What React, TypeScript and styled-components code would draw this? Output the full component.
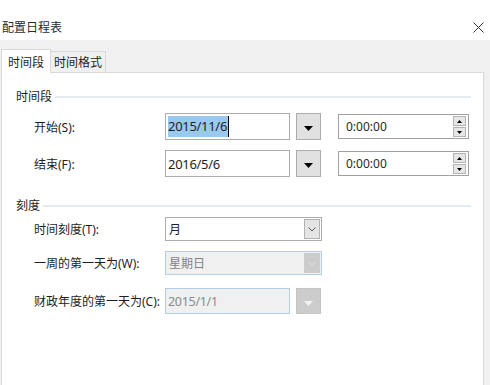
import styled, { createGlobalStyle } from 'styled-components';

const GlobalStyle = createGlobalStyle`
  html, body {
    margin: 0;
    padding: 0;
    background: #fff;
  }
  body {
    font-family: 'Noto Sans', 'Noto Sans CJK SC', sans-serif;
    color: #1e1e1e;
  }
`;

const Window = styled.div`
  width: 490px;
  height: 385px;
  overflow: hidden;
  background: #fff;
  display: flex;
  flex-direction: column;
`;

const TitleBar = styled.div`
  height: 40px;
  flex: none;
  display: flex;
  align-items: center;
  justify-content: space-between;
  padding: 0 6px 0 2px;
  box-sizing: border-box;
`;

const Title = styled.span`
  font-size: 12px;
  color: #2b2b2b;
  margin-top: 14px;
`;

const CloseButton = styled.div`
  width: 11px;
  height: 11px;
  margin-top: 15px;
  display: flex;
`;

const Body = styled.div`
  flex: 1;
  background: #f0f0f0;
  padding: 9px 6px 0 1px;
  display: flex;
  flex-direction: column;
`;

const TabStrip = styled.div`
  height: 23px;
  display: flex;
  align-items: flex-end;
  position: relative;
  z-index: 1;
`;

const Tab = styled.div<{ $active?: boolean }>`
  box-sizing: border-box;
  width: ${(p) => (p.$active ? 50 : 55)}px;
  height: ${(p) => (p.$active ? 24 : 21)}px;
  margin-bottom: ${(p) => (p.$active ? -1 : 0)}px;
  border: 1px solid #d9d9d9;
  border-bottom: none;
  border-left: ${(p) => (p.$active ? '1px solid #d9d9d9' : 'none')};
  background: ${(p) => (p.$active ? '#fff' : '#f0f0f0')};
  font-size: 12px;
  color: #1e1e1e;
  display: flex;
  align-items: center;
  justify-content: center;
`;

const Panel = styled.div`
  flex: 1;
  background: #fff;
  border: 1px solid #d9d9d9;
  border-bottom: none;
  padding: 15px 12px 0 14px;
  display: flex;
  flex-direction: column;
`;

const GroupHeader = styled.div<{ $gap?: number }>`
  height: 16px;
  display: flex;
  align-items: center;
  gap: 3px;
  margin-top: ${(p) => p.$gap ?? 0}px;
`;

const GroupTitle = styled.span`
  font-size: 12px;
  color: #1e1e1e;
`;

const GroupRule = styled.div`
  flex: 1;
  height: 2px;
  background: #e5eaef;
  margin-top: 2px;
`;

const FieldRow = styled.div<{ $gap: number; $height: number }>`
  display: flex;
  align-items: center;
  height: ${(p) => p.$height}px;
  margin-top: ${(p) => p.$gap}px;
  padding-left: 18px;
`;

const FieldLabel = styled.span`
  width: 131px;
  flex: none;
  font-size: 12px;
  color: #1e1e1e;
`;

const DateInput = styled.div<{ $disabled?: boolean }>`
  box-sizing: border-box;
  width: 125px;
  height: ${(p) => (p.$disabled ? 26 : 27)}px;
  border: 1px solid ${(p) => (p.$disabled ? '#b5cde6' : '#acacac')};
  background: ${(p) => (p.$disabled ? '#f0f0f0' : '#fff')};
  color: ${(p) => (p.$disabled ? '#8a8a8a' : '#1e1e1e')};
  font-size: ${(p) => (p.$disabled ? 12.5 : 13)}px;
  letter-spacing: -0.3px;
  display: flex;
  align-items: center;
  padding: 0 0 0 2px;
`;

const Selected = styled.span`
  background: #99c9ef;
  color: #1e1e1e;
  padding: 1px 1px 2px 0;
  border-right: 1px solid #000;
`;

const DropButton = styled.div<{ $disabled?: boolean }>`
  box-sizing: border-box;
  width: 25px;
  height: ${(p) => (p.$disabled ? 26 : 27)}px;
  margin-left: 6px;
  border: 1px solid ${(p) => (p.$disabled ? '#c4c4c4' : '#adadad')};
  background: ${(p) => (p.$disabled ? '#cccccc' : '#e1e1e1')};
  display: flex;
  align-items: center;
  justify-content: center;
  padding-top: 4px;
`;

const TimeBox = styled.div`
  box-sizing: border-box;
  width: 131px;
  height: 25px;
  margin-left: 17px;
  border: 1px solid #a0a0a0;
  background: #fff;
  display: flex;
  align-items: center;
  justify-content: space-between;
  padding: 0 2px 0 7px;
  font-size: 12px;
  color: #2a2a2a;
`;

const Spinner = styled.div`
  width: 13px;
  height: 21px;
  display: flex;
  flex-direction: column;
  gap: 1px;
`;

const SpinButton = styled.div`
  box-sizing: border-box;
  flex: 1;
  border: 1px solid #b4b4b4;
  background: #e6e6e6;
  display: flex;
  align-items: center;
  justify-content: center;
`;

const Combo = styled.div<{ $disabled?: boolean }>`
  box-sizing: border-box;
  width: 157px;
  height: 24px;
  border: 1px solid ${(p) => (p.$disabled ? '#b5cde6' : '#acacac')};
  background: ${(p) => (p.$disabled ? '#f0f0f0' : '#fff')};
  color: ${(p) => (p.$disabled ? '#838383' : '#1e1e1e')};
  font-size: 12px;
  display: flex;
  align-items: center;
  justify-content: space-between;
  padding: 0 1px 0 3px;
`;

const ComboArrow = styled.div<{ $disabled?: boolean }>`
  box-sizing: border-box;
  width: 16px;
  height: 20px;
  border: 1px solid ${(p) => (p.$disabled ? '#cccccc' : '#b4b4b4')};
  background: ${(p) => (p.$disabled ? '#cccccc' : '#e5e5e5')};
  display: flex;
  align-items: center;
  justify-content: center;
`;

function DownTriangle({ color }: { color: string }) {
  return (
    <svg width="9" height="5" viewBox="0 0 9 5">
      <path d="M0 0 H9 L4.5 5 Z" fill={color} />
    </svg>
  );
}

function SpinTriangle({ up }: { up?: boolean }) {
  return (
    <svg width="5" height="3" viewBox="0 0 5 3">
      <path d={up ? 'M0 3 H5 L2.5 0 Z' : 'M0 0 H5 L2.5 3 Z'} fill="#000" />
    </svg>
  );
}

function Chevron({ color }: { color: string }) {
  return (
    <svg width="8" height="5" viewBox="0 0 8 5">
      <path d="M0.5 0.5 L4 4 L7.5 0.5" fill="none" stroke={color} strokeWidth="1" />
    </svg>
  );
}

function TimeField({ value }: { value: string }) {
  return (
    <TimeBox>
      <span>{value}</span>
      <Spinner>
        <SpinButton>
          <SpinTriangle up />
        </SpinButton>
        <SpinButton>
          <SpinTriangle />
        </SpinButton>
      </Spinner>
    </TimeBox>
  );
}

export default function App() {
  return (
    <Window>
      <GlobalStyle />
      <TitleBar>
        <Title>配置日程表</Title>
        <CloseButton>
          <svg width="11" height="11" viewBox="0 0 11 11">
            <path d="M0.5 0.5 L10.5 10.5 M10.5 0.5 L0.5 10.5" stroke="#333" strokeWidth="1" />
          </svg>
        </CloseButton>
      </TitleBar>
      <Body>
        <TabStrip>
          <Tab $active>时间段</Tab>
          <Tab>时间格式</Tab>
        </TabStrip>
        <Panel>
          <GroupHeader>
            <GroupTitle>时间段</GroupTitle>
            <GroupRule />
          </GroupHeader>
          <FieldRow $gap={9} $height={27}>
            <FieldLabel>开始(S):</FieldLabel>
            <DateInput>
              <Selected>2015/11/6</Selected>
            </DateInput>
            <DropButton>
              <DownTriangle color="#000" />
            </DropButton>
            <TimeField value="0:00:00" />
          </FieldRow>
          <FieldRow $gap={10} $height={27}>
            <FieldLabel>结束(F):</FieldLabel>
            <DateInput>2016/5/6</DateInput>
            <DropButton>
              <DownTriangle color="#000" />
            </DropButton>
            <TimeField value="0:00:00" />
          </FieldRow>

          <GroupHeader $gap={20}>
            <GroupTitle>刻度</GroupTitle>
            <GroupRule />
          </GroupHeader>
          <FieldRow $gap={4} $height={24}>
            <FieldLabel>时间刻度(T):</FieldLabel>
            <Combo>
              <span>月</span>
              <ComboArrow>
                <Chevron color="#555" />
              </ComboArrow>
            </Combo>
          </FieldRow>
          <FieldRow $gap={10} $height={24}>
            <FieldLabel>一周的第一天为(W):</FieldLabel>
            <Combo $disabled>
              <span>星期日</span>
              <ComboArrow $disabled>
                <Chevron color="#e0e0e0" />
              </ComboArrow>
            </Combo>
          </FieldRow>
          <FieldRow $gap={13} $height={26}>
            <FieldLabel>财政年度的第一天为(C):</FieldLabel>
            <DateInput $disabled>2015/1/1</DateInput>
            <DropButton $disabled>
              <DownTriangle color="#f2f2f2" />
            </DropButton>
          </FieldRow>
        </Panel>
      </Body>
    </Window>
  );
}
